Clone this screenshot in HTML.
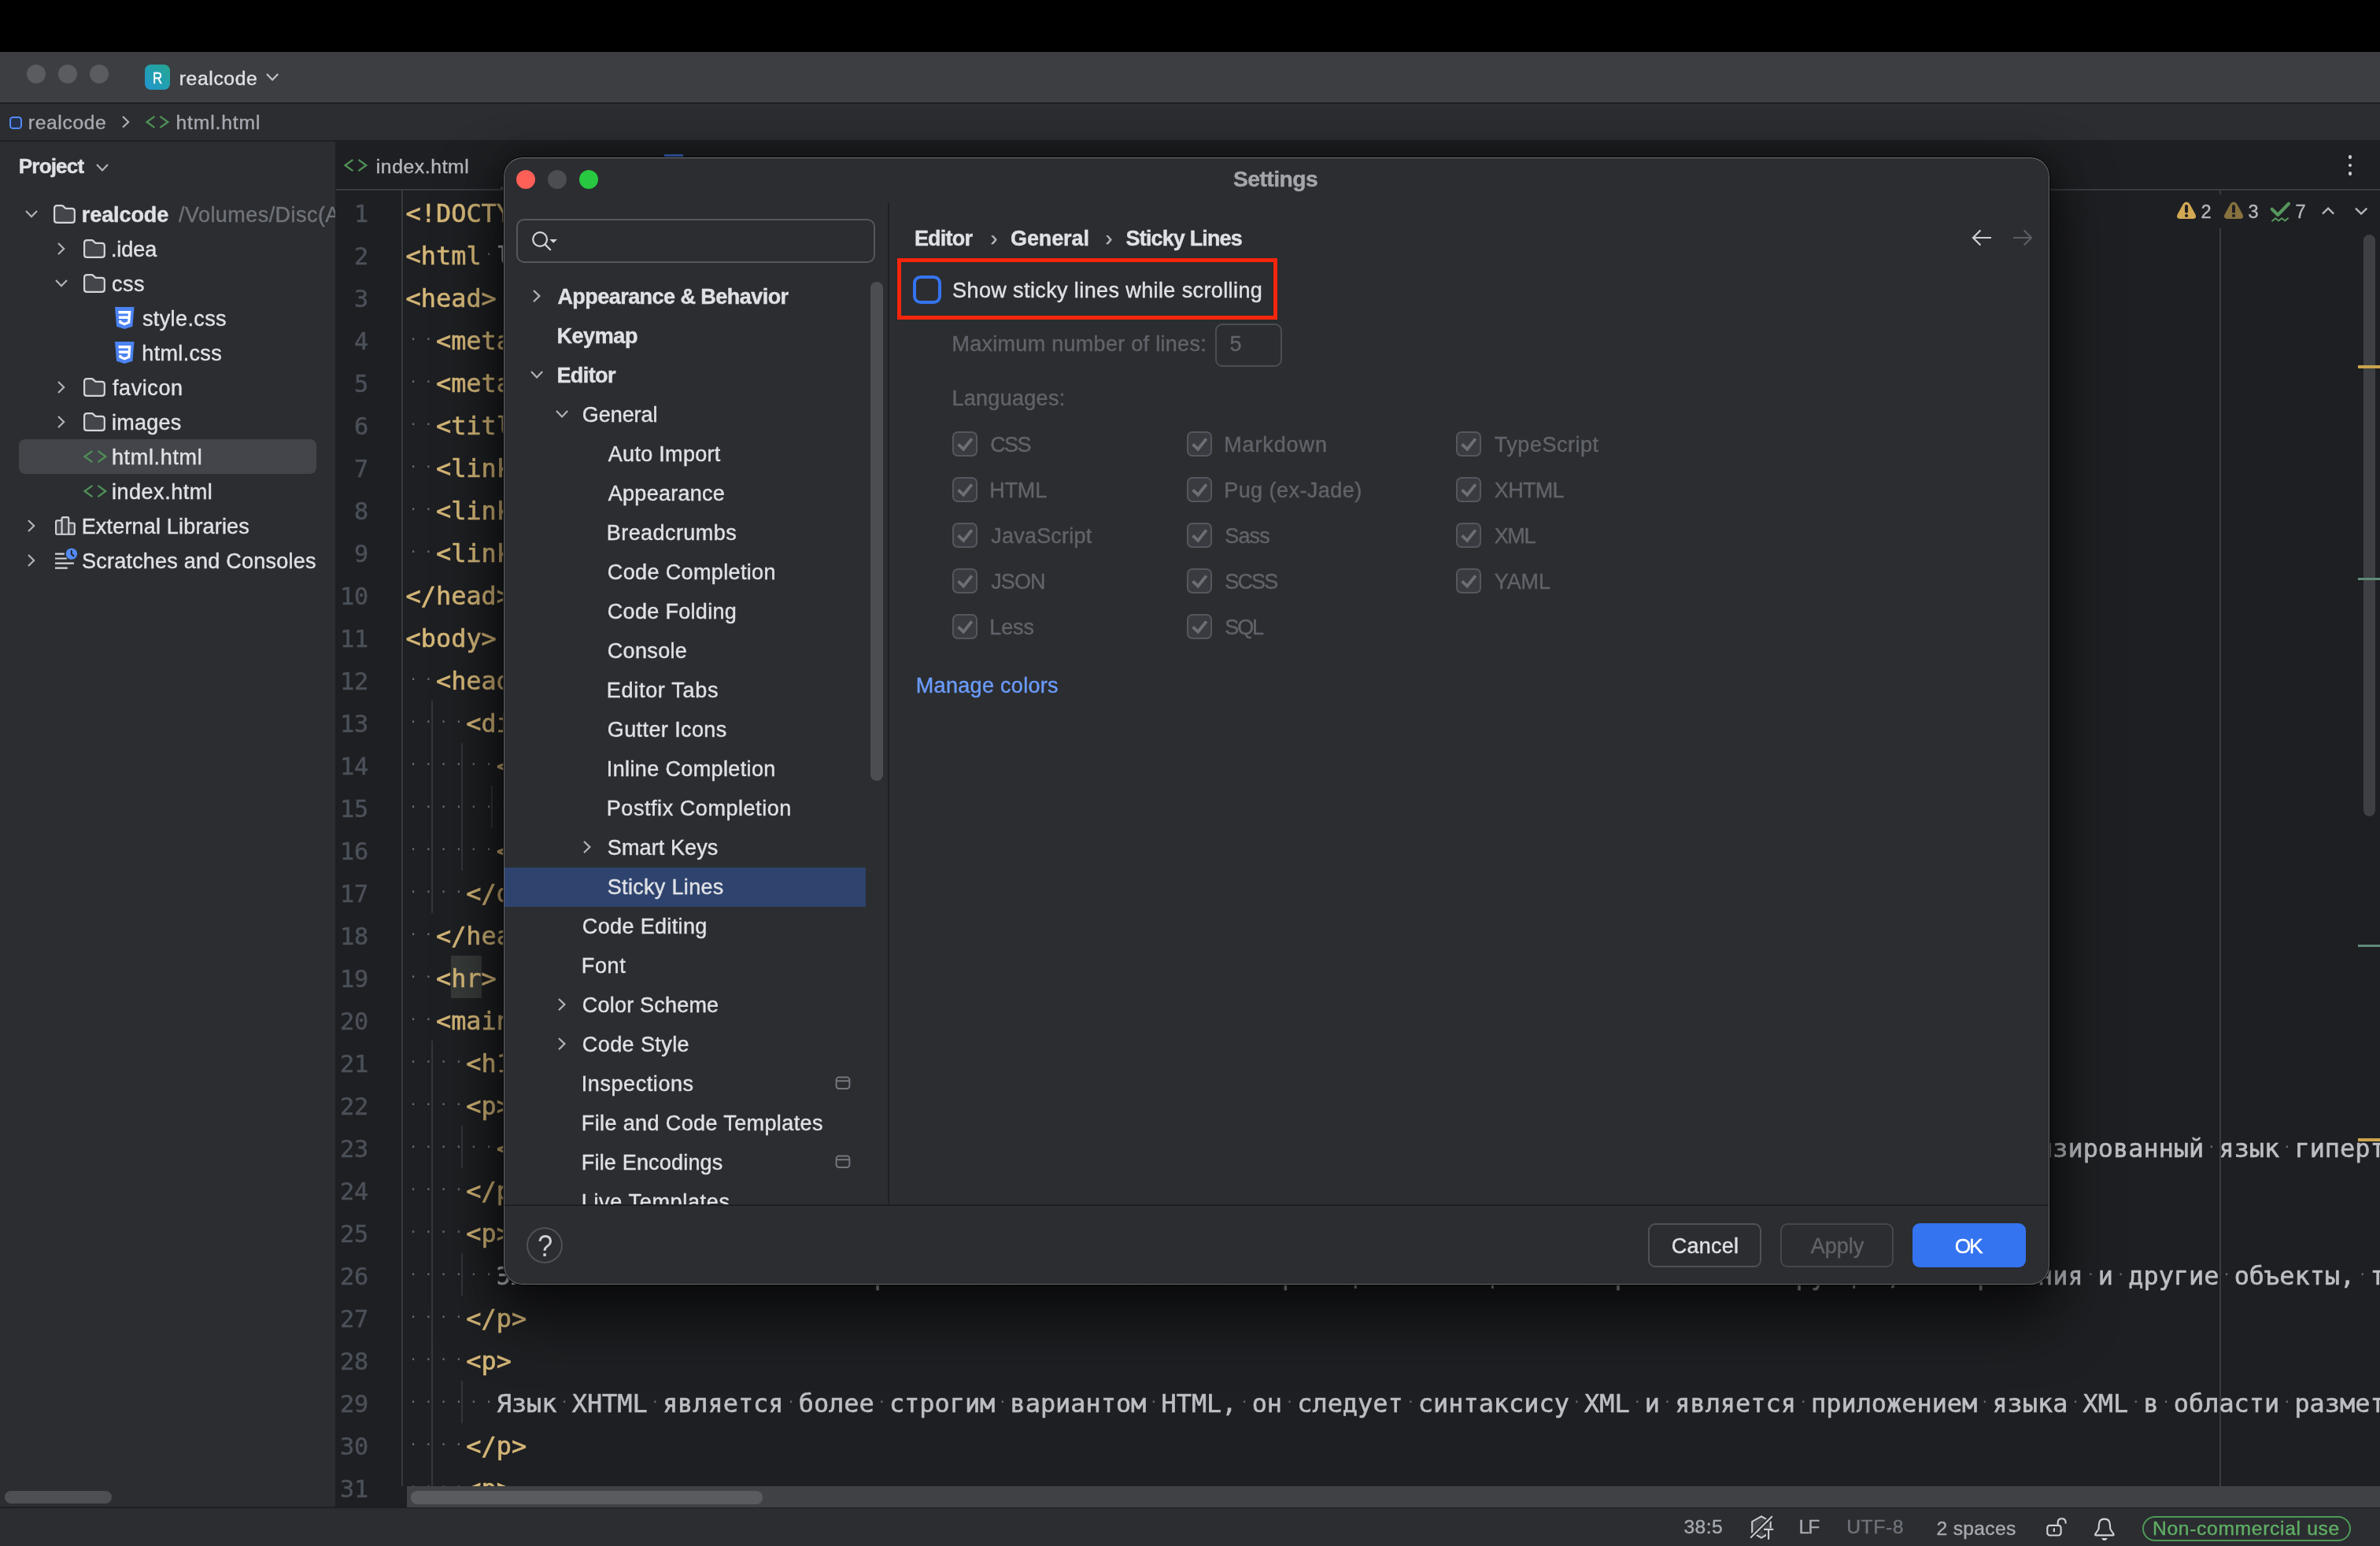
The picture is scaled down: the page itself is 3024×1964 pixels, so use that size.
<!DOCTYPE html>
<html lang="en"><head><meta charset="utf-8"><title>Settings – Sticky Lines</title>
<style>
html,body{margin:0;padding:0;background:#1e1f22}
body{width:3024px;height:1964px;overflow:hidden;position:relative;font-family:"Liberation Sans", sans-serif;font-size:27.0px;color:#dfe1e5}
#root{position:absolute;left:0;top:0;width:3024px;height:1964px;overflow:hidden;will-change:transform}
#root div,#root svg,#root span.t{position:absolute;display:block}
span.t{white-space:pre;line-height:0;-webkit-text-stroke:0.4px}
.cl{left:515.6px;height:54px;margin-top:0.9px;line-height:56px;-webkit-text-stroke:0.6px;font-family:"DejaVu Sans Mono", "Liberation Mono", monospace;font-size:31.9px;color:#bcbec4;white-space:pre;letter-spacing:0}
.cl b{font-weight:400}
.cl i{font-style:normal;color:#666a70;display:inline-block;width:19.2px;text-align:center;font-size:23px;line-height:10px;vertical-align:6.5px;-webkit-text-stroke:0;font-family:"Liberation Sans", sans-serif}
.ln{left:426px;width:42.3px;height:54px;margin-top:1.5px;line-height:56px;-webkit-text-stroke:0.5px;text-align:right;font-family:"DejaVu Sans Mono", "Liberation Mono", monospace;font-size:30.2px;color:#4b5059}
#dlg{left:640px;top:200px;width:1964px;height:1431.6px;background:#2b2d30;border-radius:24px;overflow:hidden}
#dlgsh{left:640px;top:200px;width:1964px;height:1431.6px;border-radius:24px;box-shadow:0 0 0 1px rgba(0,0,0,.85),0 36px 76px 8px rgba(0,0,0,.6),0 0 44px rgba(0,0,0,.38)}
#dlgbd{left:0;top:0;width:1964px;height:1431.6px;box-sizing:border-box;border:1.5px solid #63666b;border-top-color:#74777c;border-radius:24px}
#tree{left:1px;top:58px;width:487px;height:1272px;overflow:hidden}
</style></head>
<body><div id="root">
<div style="left:0.0px;top:0.0px;width:3024px;height:66px;background:#000;"></div>
<div style="left:0.0px;top:66.0px;width:3024px;height:64px;background:#3c3e41;"></div>
<div style="left:0.0px;top:130.0px;width:3024px;height:2px;background:#1e1f22;"></div>
<div style="left:0.0px;top:132.0px;width:3024px;height:46px;background:#2b2d30;"></div>
<div style="left:0.0px;top:178.0px;width:3024px;height:2px;background:#1e1f22;"></div>
<div style="left:0.0px;top:180.0px;width:426px;height:1736px;background:#2b2d30;"></div>
<div style="left:426.0px;top:180.0px;width:2598px;height:1736px;background:#1e1f22;"></div>
<div style="left:427.0px;top:239.6px;width:2597px;height:2px;background:#393b40;"></div>
<div style="left:0.0px;top:1916.0px;width:3024px;height:48px;background:#2b2d30;"></div>
<div style="left:34.0px;top:82.0px;width:24px;height:24px;background:#5b5c5f;border-radius:50%"></div>
<div style="left:73.7px;top:82.0px;width:24px;height:24px;background:#5b5c5f;border-radius:50%"></div>
<div style="left:113.5px;top:82.0px;width:24px;height:24px;background:#5b5c5f;border-radius:50%"></div>
<div style="left:184px;top:82px;width:32.2px;height:32.2px;border-radius:7.5px;background:linear-gradient(45deg,#2395cf 0%,#21a0b0 50%,#28a490 100%)"></div>
<svg style="left:335.90px;top:91.20px" width="20.2" height="13.4" viewBox="0 0 20.2 13.4" fill="none"><path d="M3 3 L10.1 10.4 L17.2 3" stroke="#c0c3c9" stroke-width="2.2"/></svg>
<div style="left:11.9px;top:147.9px;width:16.1px;height:16.1px;box-sizing:border-box;border:2.1px solid #548af7;border-radius:4.6px;background:#25324d"></div>
<svg style="left:153.00px;top:144.50px" width="13.2" height="19.8" viewBox="0 0 13.2 19.8" fill="none"><path d="M3 3 L10.2 9.9 L3 16.8" stroke="#b0b3b9" stroke-width="2.1"/></svg>
<svg style="left:184.30px;top:144.60px" width="32" height="20" viewBox="0 0 32 20" fill="none"><path d="M12.4 2.9 L2.6 10 L12.4 17.1 M19.4 2.9 L29.2 10 L19.4 17.1" stroke="#4f8f57" stroke-width="2.4"/></svg>
<svg style="left:120.00px;top:205.80px" width="20" height="13.4" viewBox="0 0 20 13.4" fill="none"><path d="M3 3 L10.0 10.4 L17 3" stroke="#b0b3b9" stroke-width="2.2"/></svg>
<div style="left:24.0px;top:558.0px;width:378px;height:44px;background:#43454a;border-radius:8px"></div>
<svg style="left:30.05px;top:265.40px" width="20" height="13.2" viewBox="0 0 20 13.2" fill="none"><path d="M3 3 L10.0 10.2 L17 3" stroke="#b0b3b9" stroke-width="2.2"/></svg>
<svg style="left:68.10px;top:260.10px" width="28" height="25" viewBox="0 0 28 25" fill="none"><path d="M1.1 4.6 Q1.1 1.1 4.6 1.1 L10.4 1.1 Q11.5 1.1 12.3 1.9 L14.5 4.1 Q15.2 4.8 16.3 4.8 L23.3 4.8 Q26.8 4.8 26.8 8.3 L26.8 19.4 Q26.8 22.9 23.3 22.9 L4.6 22.9 Q1.1 22.9 1.1 19.4 Z" fill="#43454a" stroke="#d3d5da" stroke-width="2.2"/></svg>
<svg style="left:70.90px;top:306.10px" width="13.2" height="20" viewBox="0 0 13.2 20" fill="none"><path d="M3 3 L10.2 10.0 L3 17" stroke="#b0b3b9" stroke-width="2.2"/></svg>
<svg style="left:106.00px;top:304.10px" width="28" height="25" viewBox="0 0 28 25" fill="none"><path d="M1.1 4.6 Q1.1 1.1 4.6 1.1 L10.4 1.1 Q11.5 1.1 12.3 1.9 L14.5 4.1 Q15.2 4.8 16.3 4.8 L23.3 4.8 Q26.8 4.8 26.8 8.3 L26.8 19.4 Q26.8 22.9 23.3 22.9 L4.6 22.9 Q1.1 22.9 1.1 19.4 Z" fill="#43454a" stroke="#d3d5da" stroke-width="2.2"/></svg>
<svg style="left:68.00px;top:353.40px" width="20" height="13.2" viewBox="0 0 20 13.2" fill="none"><path d="M3 3 L10.0 10.2 L17 3" stroke="#b0b3b9" stroke-width="2.2"/></svg>
<svg style="left:106.00px;top:348.10px" width="28" height="25" viewBox="0 0 28 25" fill="none"><path d="M1.1 4.6 Q1.1 1.1 4.6 1.1 L10.4 1.1 Q11.5 1.1 12.3 1.9 L14.5 4.1 Q15.2 4.8 16.3 4.8 L23.3 4.8 Q26.8 4.8 26.8 8.3 L26.8 19.4 Q26.8 22.9 23.3 22.9 L4.6 22.9 Q1.1 22.9 1.1 19.4 Z" fill="#43454a" stroke="#d3d5da" stroke-width="2.2"/></svg>
<svg style="left:145.70px;top:390.00px" width="25" height="29" viewBox="0 0 25 29" fill="none"><path d="M0 0 H24.5 L22.4 24.7 L12.2 28.1 L2.1 24.7 Z" fill="#4b83f2"/><path d="M4.4 5.1 H20.4 L19.3 20.6 L12.15 23.4 L5.3 20.6 L5.1 16.9 H8.3 L8.45 18.6 L12.15 20 L16.15 18.5 L16.45 14.9 H5 L4.8 11.5 H16.75 L16.95 8.5 H4.6 Z" fill="#fff"/></svg>
<svg style="left:145.70px;top:434.00px" width="25" height="29" viewBox="0 0 25 29" fill="none"><path d="M0 0 H24.5 L22.4 24.7 L12.2 28.1 L2.1 24.7 Z" fill="#4b83f2"/><path d="M4.4 5.1 H20.4 L19.3 20.6 L12.15 23.4 L5.3 20.6 L5.1 16.9 H8.3 L8.45 18.6 L12.15 20 L16.15 18.5 L16.45 14.9 H5 L4.8 11.5 H16.75 L16.95 8.5 H4.6 Z" fill="#fff"/></svg>
<svg style="left:70.90px;top:482.10px" width="13.2" height="20" viewBox="0 0 13.2 20" fill="none"><path d="M3 3 L10.2 10.0 L3 17" stroke="#b0b3b9" stroke-width="2.2"/></svg>
<svg style="left:106.00px;top:480.10px" width="28" height="25" viewBox="0 0 28 25" fill="none"><path d="M1.1 4.6 Q1.1 1.1 4.6 1.1 L10.4 1.1 Q11.5 1.1 12.3 1.9 L14.5 4.1 Q15.2 4.8 16.3 4.8 L23.3 4.8 Q26.8 4.8 26.8 8.3 L26.8 19.4 Q26.8 22.9 23.3 22.9 L4.6 22.9 Q1.1 22.9 1.1 19.4 Z" fill="#43454a" stroke="#d3d5da" stroke-width="2.2"/></svg>
<svg style="left:70.90px;top:526.10px" width="13.2" height="20" viewBox="0 0 13.2 20" fill="none"><path d="M3 3 L10.2 10.0 L3 17" stroke="#b0b3b9" stroke-width="2.2"/></svg>
<svg style="left:106.00px;top:524.10px" width="28" height="25" viewBox="0 0 28 25" fill="none"><path d="M1.1 4.6 Q1.1 1.1 4.6 1.1 L10.4 1.1 Q11.5 1.1 12.3 1.9 L14.5 4.1 Q15.2 4.8 16.3 4.8 L23.3 4.8 Q26.8 4.8 26.8 8.3 L26.8 19.4 Q26.8 22.9 23.3 22.9 L4.6 22.9 Q1.1 22.9 1.1 19.4 Z" fill="#43454a" stroke="#d3d5da" stroke-width="2.2"/></svg>
<svg style="left:104.60px;top:570.20px" width="32" height="20" viewBox="0 0 32 20" fill="none"><path d="M12.4 2.9 L2.6 10 L12.4 17.1 M19.4 2.9 L29.2 10 L19.4 17.1" stroke="#4f8f57" stroke-width="2.4"/></svg>
<svg style="left:104.60px;top:614.20px" width="32" height="20" viewBox="0 0 32 20" fill="none"><path d="M12.4 2.9 L2.6 10 L12.4 17.1 M19.4 2.9 L29.2 10 L19.4 17.1" stroke="#4f8f57" stroke-width="2.4"/></svg>
<svg style="left:32.90px;top:658.10px" width="13.2" height="20" viewBox="0 0 13.2 20" fill="none"><path d="M3 3 L10.2 10.0 L3 17" stroke="#b0b3b9" stroke-width="2.2"/></svg>
<svg style="left:70.10px;top:656.10px" width="27" height="25" viewBox="0 0 27 25" fill="none"><path d="M1.1 6.8 Q1.1 5.2 2.7 5.2 H8.6 V22.8 H2.7 Q1.1 22.8 1.1 21.2 Z M8.6 2.7 Q8.6 1.1 10.2 1.1 H15.7 Q17.3 1.1 17.3 2.7 V22.8 H8.6 Z M17.3 8.5 H23.2 Q24.8 8.5 24.8 10.1 V21.2 Q24.8 22.8 23.2 22.8 H17.3 Z" fill="#43454a" stroke="#d3d5da" stroke-width="2.1"/></svg>
<svg style="left:32.90px;top:702.10px" width="13.2" height="20" viewBox="0 0 13.2 20" fill="none"><path d="M3 3 L10.2 10.0 L3 17" stroke="#b0b3b9" stroke-width="2.2"/></svg>
<svg style="left:70.10px;top:695.50px" width="30" height="28" viewBox="0 0 30 28" fill="none"><path d="M0 7.6 H11.8 M0 13.5 H14.8 M0 19.6 H23.9 M0 25.6 H15.8" stroke="#d3d5da" stroke-width="2.1"/><circle cx="20.9" cy="7.6" r="7.2" fill="#548af7"/><path d="M20.8 3 V7.8 L24.2 10.8" stroke="#1e1f22" stroke-width="1.9" fill="none"/></svg>
<div style="left:5.5px;top:1894.0px;width:136.5px;height:16px;background:#4d4f53;border-radius:8px"></div>
<svg style="left:436.10px;top:200.10px" width="32" height="20" viewBox="0 0 32 20" fill="none"><path d="M12.4 2.9 L2.6 10 L12.4 17.1 M19.4 2.9 L29.2 10 L19.4 17.1" stroke="#4f8f57" stroke-width="2.4"/></svg>
<div style="left:843.8px;top:196.0px;width:24.7px;height:3px;background:#3a66c5;"></div>
<div style="left:635.6px;top:236.6px;width:4.4px;height:4.4px;background:#4a4c50;border-radius:50%"></div>
<div style="left:2983.6px;top:197.3px;width:4.8px;height:4.8px;background:#ced0d6;border-radius:50%"></div>
<div style="left:2983.6px;top:207.6px;width:4.8px;height:4.8px;background:#ced0d6;border-radius:50%"></div>
<div style="left:2983.6px;top:218.0px;width:4.8px;height:4.8px;background:#ced0d6;border-radius:50%"></div>
<div style="left:510.2px;top:242.0px;width:1.8px;height:1646px;background:#37393d;"></div>
<div style="left:2819.6px;top:242.0px;width:2px;height:5px;background:#393b40;"></div>
<div style="left:2819.6px;top:290.0px;width:2px;height:1598px;background:#393b40;"></div>
<div style="left:548.2px;top:890.0px;width:1.8px;height:270px;background:#34363a;"></div>
<div style="left:586.2px;top:944.0px;width:1.8px;height:162px;background:#34363a;"></div>
<div style="left:624.2px;top:998.0px;width:1.8px;height:54px;background:#34363a;"></div>
<div style="left:548.2px;top:1322.0px;width:1.8px;height:566px;background:#34363a;"></div>
<div style="left:586.2px;top:1430.0px;width:1.8px;height:54px;background:#34363a;"></div>
<div style="left:586.2px;top:1592.0px;width:1.8px;height:54px;background:#34363a;"></div>
<div style="left:586.2px;top:1754.0px;width:1.8px;height:54px;background:#34363a;"></div>
<div style="left:573.1px;top:1214.0px;width:39px;height:54px;background:#363a38;"></div>
<div style="left:3002.5px;top:298.0px;width:15.5px;height:739px;background:#3e4043;border-radius:8px"></div>
<div style="left:2996.0px;top:464.0px;width:28px;height:4px;background:#c9a34e;"></div>
<div style="left:2996.0px;top:734.0px;width:28px;height:3.2px;background:#5f8a78;"></div>
<div style="left:2996.0px;top:1200.0px;width:28px;height:3.2px;background:#5f8a78;"></div>
<div style="left:2996.0px;top:1446.2px;width:28px;height:4px;background:#c9a34e;"></div>
<svg style="left:2766.00px;top:255.60px" width="26" height="24" viewBox="0 0 26 24" fill="none"><path d="M12.05 0.6 Q14.9 0.6 16.3 3.2 L23.5 16.4 Q25.6 21.4 20.6 22 L3.5 22 Q-1.5 21.4 0.6 16.4 L7.8 3.2 Q9.2 0.6 12.05 0.6 Z" fill="#d1a853"/><path d="M12.05 6 V12.8" stroke="#1e1f22" stroke-width="4" stroke-linecap="round"/><circle cx="12.05" cy="18" r="2.1" fill="#1e1f22"/></svg>
<svg style="left:2826.00px;top:255.60px" width="26" height="24" viewBox="0 0 26 24" fill="none"><path d="M12.05 0.6 Q14.9 0.6 16.3 3.2 L23.5 16.4 Q25.6 21.4 20.6 22 L3.5 22 Q-1.5 21.4 0.6 16.4 L7.8 3.2 Q9.2 0.6 12.05 0.6 Z" fill="#86713f"/><path d="M12.05 6 V12.8" stroke="#1e1f22" stroke-width="4" stroke-linecap="round"/><circle cx="12.05" cy="18" r="2.1" fill="#1e1f22"/></svg>
<svg style="left:2880.00px;top:250.00px" width="36" height="36" viewBox="0 0 36 36" fill="none"><path d="M6.8 15.8 L14.2 23 L28 8.7" stroke="#57965c" stroke-width="4.2" stroke-linecap="round" stroke-linejoin="round"/><path d="M6.5 31.3 L11.3 27.2 L15.1 30.4 L19.3 27.2 L23.2 30.4 L27.7 26.8" stroke="#57965c" stroke-width="2"/></svg>
<svg style="left:2945.00px;top:256.00px" width="26" height="22" viewBox="0 0 26 22" fill="none"><path d="M6 15.6 L13.1 8.6 L20.2 15.6" stroke="#b4b8bf" stroke-width="2.2"/></svg>
<svg style="left:2988.00px;top:258.00px" width="26" height="20" viewBox="0 0 26 20" fill="none"><path d="M5 6.6 L12.1 13.6 L19.3 6.6" stroke="#b4b8bf" stroke-width="2.2"/></svg>
<div style="left:2722.0px;top:1926.2px;width:265.4px;height:31.6px;box-sizing:border-box;border:2px solid #4e9a58;border-radius:16px"></div>
<svg style="left:2220.00px;top:1922.00px" width="38" height="38" viewBox="0 0 38 38" fill="none"><path d="M18 4.3 L29.7 11 V24.9 L18 31.6 L6.2 24.9 V11 Z" fill="#43454a" stroke="#ced0d6" stroke-width="2"/><path d="M19 19 H36 V36 H24 V26 H19 Z" fill="#2b2d30"/><path d="M4.2 31.6 L31.8 4.3" stroke="#2b2d30" stroke-width="6"/><path d="M4.2 31.6 L31.8 4.3" stroke="#ced0d6" stroke-width="2"/><path d="M21 20.9 H33.2 M27.1 20.9 V33.8" stroke="#ced0d6" stroke-width="2.1"/></svg>
<svg style="left:2596.00px;top:1924.00px" width="34" height="32" viewBox="0 0 34 32" fill="none"><rect x="5.3" y="13.9" width="17.3" height="12.6" rx="3.2" stroke="#d0d2d8" stroke-width="2.1"/><path d="M13.9 17.4 V22" stroke="#d0d2d8" stroke-width="2.2"/><path d="M18.7 13.6 V10 Q18.7 5.2 23.7 5.2 Q28.6 5.2 28.6 10 V11.6" stroke="#d0d2d8" stroke-width="2.1"/></svg>
<svg style="left:2658.00px;top:1924.00px" width="32" height="36" viewBox="0 0 32 36" fill="none"><path d="M15.9 5.6 Q22.6 5.6 22.9 13 L23.3 18.5 L27.6 25 Q28 26.4 26.6 26.4 H5.2 Q3.8 26.4 4.2 25 L8.5 18.5 L8.9 13 Q9.2 5.6 15.9 5.6 Z" stroke="#d0d2d8" stroke-width="2.1" stroke-linejoin="round"/><path d="M12.2 30 H19.6 Q18.6 33 15.9 33 Q13.2 33 12.2 30 Z" fill="#d0d2d8"/></svg>
<div class="ln" style="top:242px">1</div><div class="cl" style="top:242px"><b style="color:#d5b778">&lt;!DOCTYPE<i>·</i></b>html<b style="color:#d5b778">&gt;</b></div>
<div class="ln" style="top:296px">2</div><div class="cl" style="top:296px"><b style="color:#d5b778">&lt;html</b><i>·</i>lang<b style="color:#6aab73">=&quot;ru&quot;</b><b style="color:#d5b778">&gt;</b></div>
<div class="ln" style="top:350px">3</div><div class="cl" style="top:350px"><b style="color:#d5b778">&lt;head&gt;</b></div>
<div class="ln" style="top:404px">4</div><div class="cl" style="top:404px"><i>·</i><i>·</i><b style="color:#d5b778">&lt;meta</b><i>·</i>charset<b style="color:#6aab73">=&quot;UTF-8&quot;</b><b style="color:#d5b778">&gt;</b></div>
<div class="ln" style="top:458px">5</div><div class="cl" style="top:458px"><i>·</i><i>·</i><b style="color:#d5b778">&lt;meta</b><i>·</i>name<b style="color:#6aab73">=&quot;viewport&quot;</b><b style="color:#d5b778">&gt;</b></div>
<div class="ln" style="top:512px">6</div><div class="cl" style="top:512px"><i>·</i><i>·</i><b style="color:#d5b778">&lt;title&gt;</b>HTML<b style="color:#d5b778">&lt;/title&gt;</b></div>
<div class="ln" style="top:566px">7</div><div class="cl" style="top:566px"><i>·</i><i>·</i><b style="color:#d5b778">&lt;link</b><i>·</i>rel<b style="color:#6aab73">=&quot;icon&quot;</b><b style="color:#d5b778">&gt;</b></div>
<div class="ln" style="top:620px">8</div><div class="cl" style="top:620px"><i>·</i><i>·</i><b style="color:#d5b778">&lt;link</b><i>·</i>rel<b style="color:#6aab73">=&quot;stylesheet&quot;</b><b style="color:#d5b778">&gt;</b></div>
<div class="ln" style="top:674px">9</div><div class="cl" style="top:674px"><i>·</i><i>·</i><b style="color:#d5b778">&lt;link</b><i>·</i>rel<b style="color:#6aab73">=&quot;stylesheet&quot;</b><b style="color:#d5b778">&gt;</b></div>
<div class="ln" style="top:728px">10</div><div class="cl" style="top:728px"><b style="color:#d5b778">&lt;/head&gt;</b></div>
<div class="ln" style="top:782px">11</div><div class="cl" style="top:782px"><b style="color:#d5b778">&lt;body&gt;</b></div>
<div class="ln" style="top:836px">12</div><div class="cl" style="top:836px"><i>·</i><i>·</i><b style="color:#d5b778">&lt;header&gt;</b></div>
<div class="ln" style="top:890px">13</div><div class="cl" style="top:890px"><i>·</i><i>·</i><i>·</i><i>·</i><b style="color:#d5b778">&lt;div</b><i>·</i>class<b style="color:#6aab73">=&quot;logo&quot;</b><b style="color:#d5b778">&gt;</b></div>
<div class="ln" style="top:944px">14</div><div class="cl" style="top:944px"><i>·</i><i>·</i><i>·</i><i>·</i><i>·</i><i>·</i><b style="color:#d5b778">&lt;a</b><i>·</i>href<b style="color:#6aab73">=&quot;index.html&quot;</b><b style="color:#d5b778">&gt;</b></div>
<div class="ln" style="top:998px">15</div><div class="cl" style="top:998px"><i>·</i><i>·</i><i>·</i><i>·</i><i>·</i><i>·</i><i>·</i><i>·</i><b style="color:#d5b778">&lt;img</b><i>·</i>src<b style="color:#6aab73">=&quot;images/logo.png&quot;</b><b style="color:#d5b778">&gt;</b></div>
<div class="ln" style="top:1052px">16</div><div class="cl" style="top:1052px"><i>·</i><i>·</i><i>·</i><i>·</i><i>·</i><i>·</i><b style="color:#d5b778">&lt;/a&gt;</b></div>
<div class="ln" style="top:1106px">17</div><div class="cl" style="top:1106px"><i>·</i><i>·</i><i>·</i><i>·</i><b style="color:#d5b778">&lt;/div&gt;</b></div>
<div class="ln" style="top:1160px">18</div><div class="cl" style="top:1160px"><i>·</i><i>·</i><b style="color:#d5b778">&lt;/header&gt;</b></div>
<div class="ln" style="top:1214px">19</div><div class="cl" style="top:1214px"><i>·</i><i>·</i><b style="color:#d5b778">&lt;hr&gt;</b></div>
<div class="ln" style="top:1268px">20</div><div class="cl" style="top:1268px"><i>·</i><i>·</i><b style="color:#d5b778">&lt;main&gt;</b></div>
<div class="ln" style="top:1322px">21</div><div class="cl" style="top:1322px"><i>·</i><i>·</i><i>·</i><i>·</i><b style="color:#d5b778">&lt;h1&gt;</b>HTML<b style="color:#d5b778">&lt;/h1&gt;</b></div>
<div class="ln" style="top:1376px">22</div><div class="cl" style="top:1376px"><i>·</i><i>·</i><i>·</i><i>·</i><b style="color:#d5b778">&lt;p&gt;</b></div>
<div class="ln" style="top:1430px">23</div><div class="cl" style="top:1430px"><i>·</i><i>·</i><i>·</i><i>·</i><i>·</i><i>·</i><b style="color:#d5b778">&lt;strong&gt;</b>HTML<b style="color:#d5b778">&lt;/strong&gt;</b><i>·</i>(от<i>·</i>англ.<i>·</i>HyperText<i>·</i>Markup<i>·</i>Language<i>·</i>—<i>·</i>«язык<i>·</i>гипертекстовой<i>·</i>разметки»)<i>·</i>—<i>·</i>стандартизированный<i>·</i>язык<i>·</i>гипертекстовой<i>·</i>разметки</div>
<div class="ln" style="top:1484px">24</div><div class="cl" style="top:1484px"><i>·</i><i>·</i><i>·</i><i>·</i><b style="color:#d5b778">&lt;/p&gt;</b></div>
<div class="ln" style="top:1538px">25</div><div class="cl" style="top:1538px"><i>·</i><i>·</i><i>·</i><i>·</i><b style="color:#d5b778">&lt;p&gt;</b></div>
<div class="ln" style="top:1592px">26</div><div class="cl" style="top:1592px"><i>·</i><i>·</i><i>·</i><i>·</i><i>·</i><i>·</i>Элементы<i>·</i>HTML<i>·</i>являются<i>·</i>строительными<i>·</i>блоками<i>·</i>HTML<i>·</i>страниц.<i>·</i>С<i>·</i>помощью<i>·</i>HTML<i>·</i>разные<i>·</i>конструкции,<i>·</i>изображения<i>·</i>и<i>·</i>другие<i>·</i>объекты,<i>·</i>такие<i>·</i>как</div>
<div class="ln" style="top:1646px">27</div><div class="cl" style="top:1646px"><i>·</i><i>·</i><i>·</i><i>·</i><b style="color:#d5b778">&lt;/p&gt;</b></div>
<div class="ln" style="top:1700px">28</div><div class="cl" style="top:1700px"><i>·</i><i>·</i><i>·</i><i>·</i><b style="color:#d5b778">&lt;p&gt;</b></div>
<div class="ln" style="top:1754px">29</div><div class="cl" style="top:1754px"><i>·</i><i>·</i><i>·</i><i>·</i><i>·</i><i>·</i>Язык<i>·</i>XHTML<i>·</i>является<i>·</i>более<i>·</i>строгим<i>·</i>вариантом<i>·</i>HTML,<i>·</i>он<i>·</i>следует<i>·</i>синтаксису<i>·</i>XML<i>·</i>и<i>·</i>является<i>·</i>приложением<i>·</i>языка<i>·</i>XML<i>·</i>в<i>·</i>области<i>·</i>разметки</div>
<div class="ln" style="top:1808px">30</div><div class="cl" style="top:1808px"><i>·</i><i>·</i><i>·</i><i>·</i><b style="color:#d5b778">&lt;/p&gt;</b></div>
<div class="ln" style="top:1862px">31</div><div class="cl" style="top:1862px"><i>·</i><i>·</i><i>·</i><i>·</i><b style="color:#d5b778">&lt;p&gt;</b></div>
<div style="left:0.0px;top:1914.4px;width:3024px;height:1.6px;background:#1e1f22;"></div>
<div style="left:517.0px;top:1888.0px;width:2507px;height:27px;background:#3f4144;"></div>
<div style="left:521.5px;top:1894.0px;width:447.5px;height:16.5px;background:#595b5f;border-radius:8px"></div>
<span class="t" style="left:194.4px;top:98.80px;font-size:20.2px;color:#fff;letter-spacing:0;transform:scaleX(.84);transform-origin:0 0">R</span>
<span class="t" style="left:227.7px;top:99.74px;font-size:24.7px;letter-spacing:0.633px;">realcode</span>
<span class="t" style="left:35.8px;top:155.94px;font-size:24.7px;color:#a6a9b0;letter-spacing:0.619px;">realcode</span>
<span class="t" style="left:223.4px;top:155.94px;font-size:24.7px;color:#a6a9b0;letter-spacing:0.869px;">html.html</span>
<span class="t" style="left:23.8px;top:211.29px;font-size:26px;font-weight:700;letter-spacing:-0.814px;">Project</span>
<span class="t" style="left:103.8px;top:273.34px;font-weight:700;letter-spacing:-0.092px;">realcode</span>
<span class="t" style="left:140.9px;top:317.34px;letter-spacing:-0.033px;">.idea</span>
<span class="t" style="left:141.9px;top:361.34px;letter-spacing:0.500px;">css</span>
<span class="t" style="left:181.0px;top:405.34px;letter-spacing:0.373px;">style.css</span>
<span class="t" style="left:180.3px;top:449.34px;letter-spacing:0.342px;">html.css</span>
<span class="t" style="left:142.9px;top:493.34px;letter-spacing:0.611px;">favicon</span>
<span class="t" style="left:141.9px;top:537.34px;letter-spacing:0.252px;">images</span>
<span class="t" style="left:141.9px;top:581.34px;letter-spacing:0.660px;">html.html</span>
<span class="t" style="left:141.9px;top:625.34px;letter-spacing:0.538px;">index.html</span>
<span class="t" style="left:103.7px;top:669.34px;letter-spacing:0.177px;">External Libraries</span>
<span class="t" style="left:104.0px;top:713.34px;letter-spacing:0.226px;">Scratches and Consoles</span>
<span class="t" style="left:227.0px;top:273.44px;color:#6f737a;letter-spacing:0.45px;clip-path:inset(-30px calc(100% - 199px) -30px 0)">/Volumes/Disc(A</span>
<span class="t" style="left:477.7px;top:212.24px;font-size:24.7px;color:#b4b7bd;letter-spacing:0.619px;">index.html</span>
<span class="t" style="left:2796.6px;top:269.12px;font-size:23.6px;color:#b4b8bf;letter-spacing:0">2</span>
<span class="t" style="left:2856.6px;top:269.12px;font-size:23.6px;color:#b4b8bf;letter-spacing:0">3</span>
<span class="t" style="left:2916.4px;top:269.12px;font-size:23.6px;color:#b4b8bf;letter-spacing:0">7</span>
<span class="t" style="left:2139.5px;top:1939.84px;font-size:24.7px;color:#a6a9b0;letter-spacing:0.360px;">38:5</span>
<span class="t" style="left:2285.4px;top:1939.84px;font-size:24.7px;color:#a6a9b0;letter-spacing:-1.830px;">LF</span>
<span class="t" style="left:2346.2px;top:1939.84px;font-size:24.7px;color:#6f737a;letter-spacing:0.598px;">UTF-8</span>
<span class="t" style="left:2460.5px;top:1941.54px;font-size:24.7px;color:#a6a9b0;letter-spacing:0.290px;">2 spaces</span>
<span class="t" style="left:2735.0px;top:1941.64px;font-size:24.7px;color:#5fad65;letter-spacing:0.639px;">Non-commercial use</span>
<div id="dlgsh"></div>
<div id="dlg">
<div id="tree">
<div style="left:465.0px;top:100.0px;width:15.8px;height:634px;background:#4b4d51;border-radius:8px"></div>
<div style="left:0.0px;top:844.0px;width:459px;height:50px;background:#2e436e;"></div>
<svg style="left:34.00px;top:107.90px" width="13.4" height="20.2" viewBox="0 0 13.4 20.2" fill="none"><path d="M3 3 L10.4 10.1 L3 17.2" stroke="#b0b3b9" stroke-width="2.2"/></svg>
<svg style="left:31.10px;top:211.30px" width="20.2" height="13.4" viewBox="0 0 20.2 13.4" fill="none"><path d="M3 3 L10.1 10.4 L17.2 3" stroke="#b0b3b9" stroke-width="2.2"/></svg>
<svg style="left:63.10px;top:261.30px" width="20.2" height="13.4" viewBox="0 0 20.2 13.4" fill="none"><path d="M3 3 L10.1 10.4 L17.2 3" stroke="#b0b3b9" stroke-width="2.2"/></svg>
<svg style="left:98.30px;top:807.90px" width="13.4" height="20.2" viewBox="0 0 13.4 20.2" fill="none"><path d="M3 3 L10.4 10.1 L3 17.2" stroke="#b0b3b9" stroke-width="2.2"/></svg>
<svg style="left:65.80px;top:1007.90px" width="13.4" height="20.2" viewBox="0 0 13.4 20.2" fill="none"><path d="M3 3 L10.4 10.1 L3 17.2" stroke="#b0b3b9" stroke-width="2.2"/></svg>
<svg style="left:65.80px;top:1057.90px" width="13.4" height="20.2" viewBox="0 0 13.4 20.2" fill="none"><path d="M3 3 L10.4 10.1 L3 17.2" stroke="#b0b3b9" stroke-width="2.2"/></svg>
<svg style="left:420.00px;top:1108.60px" width="20" height="18" viewBox="0 0 20 18" fill="none"><rect x="1.6" y="1.6" width="16.8" height="14.4" rx="3.4" stroke="#72767d" stroke-width="2"/><path d="M2 6.2 H18" stroke="#72767d" stroke-width="2"/></svg>
<svg style="left:420.00px;top:1208.60px" width="20" height="18" viewBox="0 0 20 18" fill="none"><rect x="1.6" y="1.6" width="16.8" height="14.4" rx="3.4" stroke="#72767d" stroke-width="2"/><path d="M2 6.2 H18" stroke="#72767d" stroke-width="2"/></svg>
<span class="t" style="left:67.4px;top:119.14px;font-weight:700;letter-spacing:-0.545px;">Appearance &amp; Behavior</span>
<span class="t" style="left:66.4px;top:169.14px;font-weight:700;letter-spacing:-0.411px;">Keymap</span>
<span class="t" style="left:66.4px;top:219.14px;font-weight:700;letter-spacing:-0.577px;">Editor</span>
<span class="t" style="left:98.8px;top:269.14px;letter-spacing:-0.060px;">General</span>
<span class="t" style="left:131.8px;top:319.14px;letter-spacing:0.294px;">Auto Import</span>
<span class="t" style="left:131.8px;top:369.14px;letter-spacing:0.267px;">Appearance</span>
<span class="t" style="left:129.8px;top:419.14px;letter-spacing:0.434px;">Breadcrumbs</span>
<span class="t" style="left:130.8px;top:469.14px;letter-spacing:0.364px;">Code Completion</span>
<span class="t" style="left:130.8px;top:519.14px;letter-spacing:0.310px;">Code Folding</span>
<span class="t" style="left:130.8px;top:569.14px;letter-spacing:0.326px;">Console</span>
<span class="t" style="left:129.8px;top:619.14px;letter-spacing:0.703px;">Editor Tabs</span>
<span class="t" style="left:130.8px;top:669.14px;letter-spacing:0.403px;">Gutter Icons</span>
<span class="t" style="left:129.8px;top:719.14px;letter-spacing:0.369px;">Inline Completion</span>
<span class="t" style="left:129.8px;top:769.14px;letter-spacing:0.554px;">Postfix Completion</span>
<span class="t" style="left:130.8px;top:819.14px;letter-spacing:0.107px;">Smart Keys</span>
<span class="t" style="left:130.8px;top:869.14px;letter-spacing:0.313px;">Sticky Lines</span>
<span class="t" style="left:98.8px;top:919.14px;letter-spacing:0.356px;">Code Editing</span>
<span class="t" style="left:97.8px;top:969.14px;letter-spacing:0.658px;">Font</span>
<span class="t" style="left:98.8px;top:1019.14px;letter-spacing:0.204px;">Color Scheme</span>
<span class="t" style="left:98.8px;top:1069.14px;letter-spacing:0.416px;">Code Style</span>
<span class="t" style="left:97.8px;top:1119.14px;letter-spacing:0.572px;">Inspections</span>
<span class="t" style="left:97.8px;top:1169.14px;letter-spacing:0.384px;">File and Code Templates</span>
<span class="t" style="left:97.8px;top:1219.14px;letter-spacing:0.185px;">File Encodings</span>
<span class="t" style="left:97.8px;top:1269.14px;letter-spacing:0.655px;">Live Templates</span>
</div>
<div style="left:15.9px;top:15.8px;width:24.2px;height:24.2px;background:#fe5f57;border-radius:50%"></div>
<div style="left:55.9px;top:15.8px;width:24.2px;height:24.2px;background:#4c4d51;border-radius:50%"></div>
<div style="left:95.9px;top:15.8px;width:24.2px;height:24.2px;background:#28c840;border-radius:50%"></div>
<div style="left:16.0px;top:77.9px;width:456px;height:56.1px;box-sizing:border-box;border:2px solid #54575c;border-radius:10px"></div>
<svg style="left:34.80px;top:92.00px" width="40" height="30" viewBox="0 0 40 30" fill="none"><circle cx="11.1" cy="12" r="8.9" stroke="#d3d5da" stroke-width="2.2"/><path d="M17.6 18.6 L24.2 25.2" stroke="#d3d5da" stroke-width="2.2" stroke-linecap="round"/><path d="M23.4 12 H32.9 L28.1 16.8 Z" fill="#d3d5da"/></svg>
<div style="left:488.0px;top:58.0px;width:2px;height:1273px;background:#1e1f22;"></div>
<div style="left:1.0px;top:1330.0px;width:1962px;height:2px;background:#1e1f22;"></div>
<svg style="left:1863.60px;top:89.00px" width="28" height="26" viewBox="0 0 28 26" fill="none"><path d="M26 13 H3.6 M12.4 3.4 L3 13 L12.4 22.6" stroke="#ced0d6" stroke-width="2.2"/></svg>
<svg style="left:1915.60px;top:89.00px" width="28" height="26" viewBox="0 0 28 26" fill="none"><path d="M2 13 H24.4 M15.6 3.4 L25 13 L15.6 22.6" stroke="#5a5d63" stroke-width="2.2"/></svg>
<div style="left:500.0px;top:128.2px;width:482.8px;height:77.7px;box-sizing:border-box;border:5px solid #f5260b;"></div>
<div style="left:520.0px;top:150.0px;width:36px;height:36px;box-sizing:border-box;border:4px solid #3574f0;border-radius:9.5px"></div>
<div style="left:904.3px;top:210.7px;width:85.2px;height:55px;box-sizing:border-box;border:2px solid #4b4e53;border-radius:9px"></div>
<div style="left:570.2px;top:348.2px;width:31.8px;height:31.8px;box-sizing:border-box;border:2px solid #54575e;border-radius:7px;background:#393b40"></div>
<svg style="left:570.20px;top:348.20px" width="32" height="32" viewBox="0 0 32 32" fill="none"><path d="M7.6 16.4 L14.2 22.6 L24.8 9.4" stroke="#6c6f76" stroke-width="3.9"/></svg>
<div style="left:570.2px;top:406.2px;width:31.8px;height:31.8px;box-sizing:border-box;border:2px solid #54575e;border-radius:7px;background:#393b40"></div>
<svg style="left:570.20px;top:406.20px" width="32" height="32" viewBox="0 0 32 32" fill="none"><path d="M7.6 16.4 L14.2 22.6 L24.8 9.4" stroke="#6c6f76" stroke-width="3.9"/></svg>
<div style="left:570.2px;top:464.2px;width:31.8px;height:31.8px;box-sizing:border-box;border:2px solid #54575e;border-radius:7px;background:#393b40"></div>
<svg style="left:570.20px;top:464.20px" width="32" height="32" viewBox="0 0 32 32" fill="none"><path d="M7.6 16.4 L14.2 22.6 L24.8 9.4" stroke="#6c6f76" stroke-width="3.9"/></svg>
<div style="left:570.2px;top:522.2px;width:31.8px;height:31.8px;box-sizing:border-box;border:2px solid #54575e;border-radius:7px;background:#393b40"></div>
<svg style="left:570.20px;top:522.20px" width="32" height="32" viewBox="0 0 32 32" fill="none"><path d="M7.6 16.4 L14.2 22.6 L24.8 9.4" stroke="#6c6f76" stroke-width="3.9"/></svg>
<div style="left:570.2px;top:580.2px;width:31.8px;height:31.8px;box-sizing:border-box;border:2px solid #54575e;border-radius:7px;background:#393b40"></div>
<svg style="left:570.20px;top:580.20px" width="32" height="32" viewBox="0 0 32 32" fill="none"><path d="M7.6 16.4 L14.2 22.6 L24.8 9.4" stroke="#6c6f76" stroke-width="3.9"/></svg>
<div style="left:868.3px;top:348.2px;width:31.8px;height:31.8px;box-sizing:border-box;border:2px solid #54575e;border-radius:7px;background:#393b40"></div>
<svg style="left:868.30px;top:348.20px" width="32" height="32" viewBox="0 0 32 32" fill="none"><path d="M7.6 16.4 L14.2 22.6 L24.8 9.4" stroke="#6c6f76" stroke-width="3.9"/></svg>
<div style="left:868.3px;top:406.2px;width:31.8px;height:31.8px;box-sizing:border-box;border:2px solid #54575e;border-radius:7px;background:#393b40"></div>
<svg style="left:868.30px;top:406.20px" width="32" height="32" viewBox="0 0 32 32" fill="none"><path d="M7.6 16.4 L14.2 22.6 L24.8 9.4" stroke="#6c6f76" stroke-width="3.9"/></svg>
<div style="left:868.3px;top:464.2px;width:31.8px;height:31.8px;box-sizing:border-box;border:2px solid #54575e;border-radius:7px;background:#393b40"></div>
<svg style="left:868.30px;top:464.20px" width="32" height="32" viewBox="0 0 32 32" fill="none"><path d="M7.6 16.4 L14.2 22.6 L24.8 9.4" stroke="#6c6f76" stroke-width="3.9"/></svg>
<div style="left:868.3px;top:522.2px;width:31.8px;height:31.8px;box-sizing:border-box;border:2px solid #54575e;border-radius:7px;background:#393b40"></div>
<svg style="left:868.30px;top:522.20px" width="32" height="32" viewBox="0 0 32 32" fill="none"><path d="M7.6 16.4 L14.2 22.6 L24.8 9.4" stroke="#6c6f76" stroke-width="3.9"/></svg>
<div style="left:868.3px;top:580.2px;width:31.8px;height:31.8px;box-sizing:border-box;border:2px solid #54575e;border-radius:7px;background:#393b40"></div>
<svg style="left:868.30px;top:580.20px" width="32" height="32" viewBox="0 0 32 32" fill="none"><path d="M7.6 16.4 L14.2 22.6 L24.8 9.4" stroke="#6c6f76" stroke-width="3.9"/></svg>
<div style="left:1210.3px;top:348.2px;width:31.8px;height:31.8px;box-sizing:border-box;border:2px solid #54575e;border-radius:7px;background:#393b40"></div>
<svg style="left:1210.30px;top:348.20px" width="32" height="32" viewBox="0 0 32 32" fill="none"><path d="M7.6 16.4 L14.2 22.6 L24.8 9.4" stroke="#6c6f76" stroke-width="3.9"/></svg>
<div style="left:1210.3px;top:406.2px;width:31.8px;height:31.8px;box-sizing:border-box;border:2px solid #54575e;border-radius:7px;background:#393b40"></div>
<svg style="left:1210.30px;top:406.20px" width="32" height="32" viewBox="0 0 32 32" fill="none"><path d="M7.6 16.4 L14.2 22.6 L24.8 9.4" stroke="#6c6f76" stroke-width="3.9"/></svg>
<div style="left:1210.3px;top:464.2px;width:31.8px;height:31.8px;box-sizing:border-box;border:2px solid #54575e;border-radius:7px;background:#393b40"></div>
<svg style="left:1210.30px;top:464.20px" width="32" height="32" viewBox="0 0 32 32" fill="none"><path d="M7.6 16.4 L14.2 22.6 L24.8 9.4" stroke="#6c6f76" stroke-width="3.9"/></svg>
<div style="left:1210.3px;top:522.2px;width:31.8px;height:31.8px;box-sizing:border-box;border:2px solid #54575e;border-radius:7px;background:#393b40"></div>
<svg style="left:1210.30px;top:522.20px" width="32" height="32" viewBox="0 0 32 32" fill="none"><path d="M7.6 16.4 L14.2 22.6 L24.8 9.4" stroke="#6c6f76" stroke-width="3.9"/></svg>
<div style="left:29.0px;top:1359.3px;width:46px;height:46px;box-sizing:border-box;border:2px solid #4e5157;border-radius:50%"></div>
<div style="left:1454.0px;top:1354.0px;width:144px;height:56px;box-sizing:border-box;border:2px solid #4e5157;border-radius:9px"></div>
<div style="left:1622.0px;top:1354.0px;width:144px;height:56px;box-sizing:border-box;border:2px solid #44474c;border-radius:9px"></div>
<div style="left:1790.0px;top:1354.0px;width:144px;height:56px;background:#3574f0;border-radius:9px"></div>
<span class="t" style="left:926.9px;top:27.39px;font-size:28.3px;font-weight:700;color:#a4a6aa;letter-spacing:-0.527px;">Settings</span>
<span class="t" style="left:521.9px;top:103.44px;font-weight:700;letter-spacing:-0.777px;">Editor</span>
<span class="t" style="left:618.5px;top:102.94px;color:#b4b8bf;letter-spacing:0">›</span>
<span class="t" style="left:644.0px;top:103.44px;font-weight:700;letter-spacing:-0.108px;">General</span>
<span class="t" style="left:764.5px;top:102.94px;color:#b4b8bf;letter-spacing:0">›</span>
<span class="t" style="left:790.6px;top:103.44px;font-weight:700;letter-spacing:-0.859px;">Sticky Lines</span>
<span class="t" style="left:570.1px;top:169.44px;letter-spacing:0.393px;">Show sticky lines while scrolling</span>
<span class="t" style="left:569.4px;top:237.24px;color:#606369;letter-spacing:0.291px;">Maximum number of lines:</span>
<span class="t" style="left:922.5px;top:237.44px;color:#606369;letter-spacing:0">5</span>
<span class="t" style="left:569.4px;top:306.34px;color:#606369;letter-spacing:0.297px;">Languages:</span>
<span class="t" style="left:618.2px;top:365.04px;color:#606369;letter-spacing:-1.654px;">CSS</span>
<span class="t" style="left:617.2px;top:423.04px;color:#606369;letter-spacing:-0.161px;">HTML</span>
<span class="t" style="left:619.2px;top:481.04px;color:#606369;letter-spacing:0.228px;">JavaScript</span>
<span class="t" style="left:619.2px;top:539.04px;color:#606369;letter-spacing:-0.870px;">JSON</span>
<span class="t" style="left:617.2px;top:597.04px;color:#606369;letter-spacing:-0.077px;">Less</span>
<span class="t" style="left:915.2px;top:365.04px;color:#606369;letter-spacing:0.882px;">Markdown</span>
<span class="t" style="left:915.2px;top:423.04px;color:#606369;letter-spacing:0.451px;">Pug (ex-Jade)</span>
<span class="t" style="left:916.2px;top:481.04px;color:#606369;letter-spacing:-0.808px;">Sass</span>
<span class="t" style="left:916.2px;top:539.04px;color:#606369;letter-spacing:-1.805px;">SCSS</span>
<span class="t" style="left:916.2px;top:597.04px;color:#606369;letter-spacing:-2.055px;">SQL</span>
<span class="t" style="left:1258.8px;top:365.04px;color:#606369;letter-spacing:0.528px;">TypeScript</span>
<span class="t" style="left:1258.8px;top:423.04px;color:#606369;letter-spacing:-0.673px;">XHTML</span>
<span class="t" style="left:1258.8px;top:481.04px;color:#606369;letter-spacing:-1.450px;">XML</span>
<span class="t" style="left:1258.8px;top:539.04px;color:#606369;letter-spacing:-0.102px;">YAML</span>
<span class="t" style="left:523.8px;top:670.94px;color:#6b9bfa;letter-spacing:0.309px;">Manage colors</span>
<span class="t" style="left:42.2px;top:1383.06px;font-size:38.5px;color:#cdcfd5;letter-spacing:0;-webkit-text-stroke:0;transform:scaleX(.9);transform-origin:50% 50%">?</span>
<span class="t" style="left:1483.8px;top:1383.44px;letter-spacing:0.231px;">Cancel</span>
<span class="t" style="left:1660.7px;top:1383.44px;color:#606369;letter-spacing:0.015px;">Apply</span>
<span class="t" style="left:1843.8px;top:1383.05px;font-size:26.4px;color:#fff;letter-spacing:-2.327px;">OK</span>
<div id="dlgbd"></div>
</div>
</div>
<script>(function(){var d=window.devicePixelRatio||1,r=document.getElementById("root");if(d>1.01&&Math.abs(window.innerWidth*d-3024)<4){r.style.transformOrigin="0 0";r.style.transform="scale("+(1/d)+")";}})();</script>
</body></html>
